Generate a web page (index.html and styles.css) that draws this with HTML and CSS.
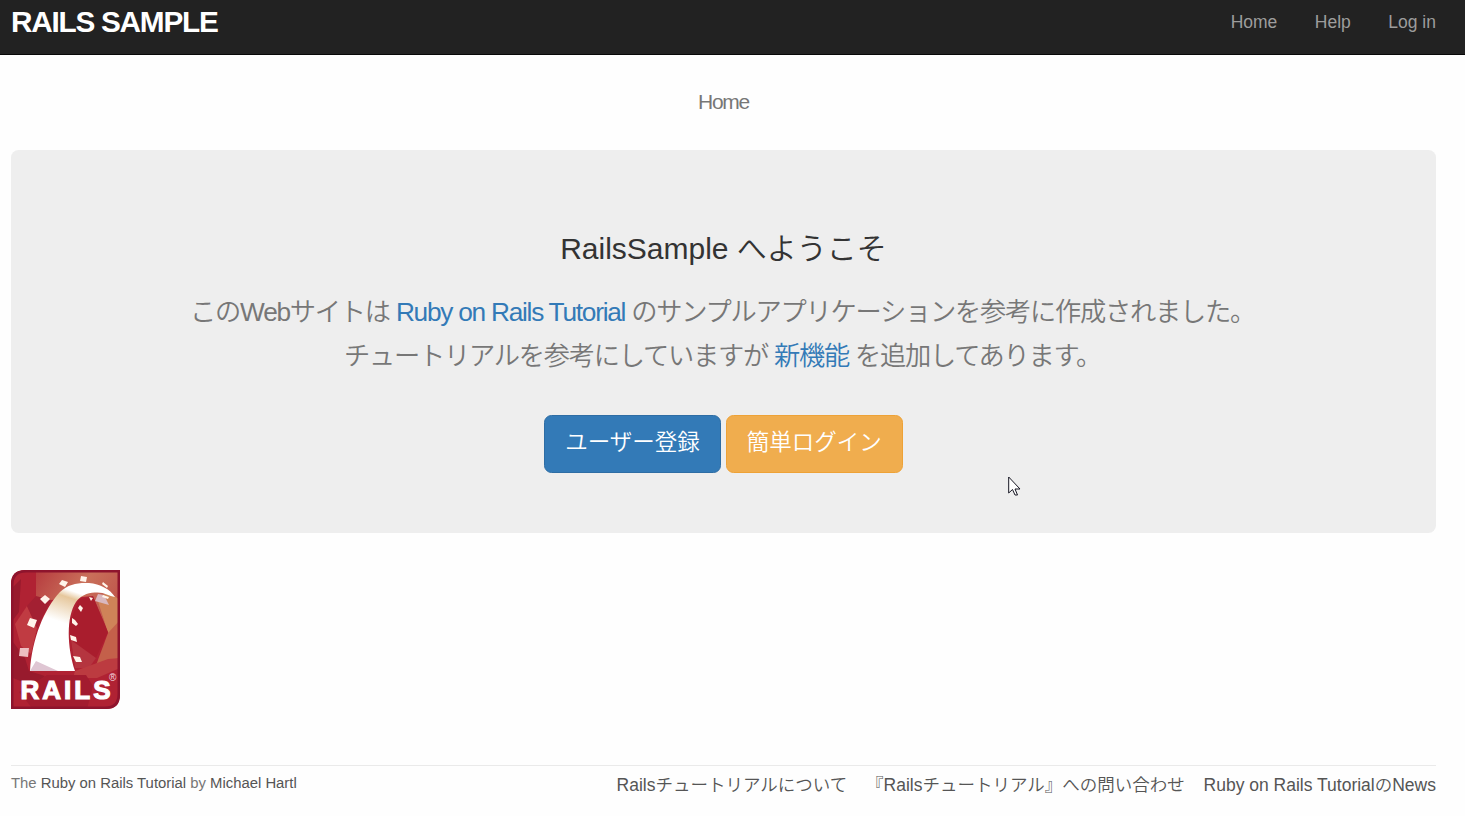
FILE: index.html
```html
<!DOCTYPE html>
<html lang="ja">
<head>
<meta charset="utf-8">
<title>Home | Rails Sample</title>
<link rel="stylesheet" href="styles.css">
</head>
<body>
<header class="navbar">
  <a class="logo">rails sample</a>
  <nav class="nav-links"><a>Home</a><a>Help</a><a>Log in</a></nav>
</header>
<main class="container">
  <h2 class="page-title">Home</h2>
  <section class="jumbotron">
    <h1 class="welcome">RailsSample へようこそ</h1>
    <p class="lead">このWebサイトは <a>Ruby on Rails Tutorial</a> のサンプルアプリケーションを参考に作成されました。</p>
    <p class="lead">チュートリアルを参考にしていますが <a>新機能</a> を追加してあります。</p>
    <div class="actions"><a class="btn btn-primary">ユーザー登録</a><a class="btn btn-warning">簡単ログイン</a></div>
  </section>
  <svg class="rails" width="109" height="139" viewBox="0 0 109 139">
    <defs>
      <clipPath id="badge"><path d="M0 14Q0 0 14 0H109V125Q109 139 95 139H0Z"/></clipPath>
      <linearGradient id="track" gradientUnits="userSpaceOnUse" x1="62" y1="14" x2="44" y2="68"><stop offset="0" stop-color="#fff"/><stop offset=".12" stop-color="#fff"/><stop offset=".25" stop-color="#e6c79c"/><stop offset=".7" stop-color="#fff"/></linearGradient>
      <linearGradient id="sky" x1="0" y1="0" x2="1" y2=".6"><stop offset="0" stop-color="#b63a3e"/><stop offset=".5" stop-color="#c9705a"/><stop offset="1" stop-color="#bd4f48"/></linearGradient>
    </defs>
    <g clip-path="url(#badge)">
      <path fill="#b02233" d="M0 0H109V139H0Z"/>
      <path fill="url(#sky)" d="M25 0H109V72L97 62L82 26L40 30L25 48Z"/>
      <path fill="#cf8358" d="M86 28L98 22L109 30V58L97 63Z"/>
      <path fill="#c4604a" d="M97 63L109 50V88L84 98Z"/>
      <path fill="#c03b42" d="M4 54L16 36L26 58L20 84L10 76Z"/>
      <path fill="#a32032" d="M25 26L40 30L26 58L16 36Z"/>
      <path fill="#981a2d" d="M2 17L10 9L8 42L2 50ZM2 72L14 88L18 101L34 106L22 116L2 108Z"/>
      <path fill="#a91d2d" d="M58 55L68 29L82 27L97 62L85 88L63 96Z"/>
      <path fill="#b5353f" d="M60 70L85 88L78 98H64Z"/>
      <path fill="#bc3b40" d="M64 101L97 89L109 88V98L86 108L62 108Z"/>
      <path fill="#a31c2f" d="M36 105H75L82 116L76 139H22L8 122Z"/>
      <path fill="url(#track)" d="M19 101C21 69 33 39 49 22C57 14 67 12.5 78 13C89 14 99 19 104 27C98 26 93 22 85 22.5C77 22 69 26 65 32C55 47 56 77 64 101Z"/>
      <path fill="#d9b8bf" d="M87 24L93 25L98 35L84 31Z"/>
      <path fill="#dfc6d3" d="M19 101L25 91L47 101Z"/>
      <g fill="#fff4ea">
        <path d="M70 6L76 7L75 12L69 11ZM51 10L57 12L54 17L48 14ZM34 25L39 29L34 34L29 29ZM19 48L26 50L23 58L16 55ZM92 12L97 16L96 18L91 14ZM78 27L82 28L80 31ZM92 25L98 27L97 29L91 27ZM69 35L72 38L70 42L67 38ZM61 48L64 50L67 54L65 56L61 53ZM59 65L65 67L66 72L60 70ZM62 86L69 87L71 92L65 92Z"/>
        <path fill="#edbec1" d="M9 78L18 78L17 87L8 86Z"/>
      </g>
      <path fill="none" stroke="#8e142d" stroke-width="3" d="M1 15Q1 1 15 1H108V124Q108 138 94 138H1Z"/>
      <text class="rails-word" x="9.5" y="129" textLength="90" lengthAdjust="spacing">RAILS</text>
      <text class="rails-mark" x="98" y="111">®</text>
    </g>
  </svg>
  <footer class="footer">
    <small>The <a>Ruby on Rails Tutorial</a> by <a>Michael Hartl</a></small>
    <nav class="footer-links"><a>Railsチュートリアルについて</a><a>『Railsチュートリアル』への問い合わせ</a><a>Ruby on Rails TutorialのNews</a></nav>
  </footer>
</main>
<svg class="cursor" width="13" height="21" viewBox="0 0 13 21"><path fill="#fff" stroke="#161622" d="M.7 1V17L4.5 13.5L7 19H9.5L7 13H12Z"/></svg>
</body>
</html>
```
FILE: styles.css
```css
* { box-sizing: border-box; }
body {
  margin: 0;
  height: 816px;
  overflow: hidden;
  background: #fefefe;
  color: #333;
  font: 17.5px/25px "Liberation Sans", Arial, "Noto Sans CJK JP DemiLight", "Noto Sans CJK JP", sans-serif;
  font-weight: 350;
}
.navbar {
  display: flex;
  justify-content: space-between;
  height: 55px;
  padding: 0 29px 0 11px;
  background: #222;
  border-bottom: 1px solid #080808;
}
.logo {
  color: #fff;
  font-size: 29.75px;
  font-weight: 700;
  letter-spacing: -1.25px;
  line-height: 44px;
  text-transform: uppercase;
}
.nav-links { display: flex; gap: 37.5px; line-height: 44px; color: #9d9d9d; }
.container { padding: 0 29px 0 11px; }
.page-title {
  margin: 0;
  padding: 34px 0 35px;
  color: #777;
  font-size: 21px;
  font-weight: 350;
  line-height: 26px;
  letter-spacing: -1.25px;
  text-align: center;
}
.jumbotron {
  height: 383px;
  padding-top: 82px;
  background: #eee;
  border-radius: 7.5px;
  text-align: center;
}
.welcome { margin: 0 0 24px; font-size: 30px; font-weight: 350; line-height: 34px; }
.lead {
  margin: 0;
  padding-right: 2px;
  color: #777;
  font-size: 26.25px;
  line-height: 44px;
  letter-spacing: -1.25px;
  white-space: nowrap;
}
.lead a { color: #337ab7; }
.actions { display: flex; justify-content: center; gap: 5px; margin-top: 37px; }
.btn {
  height: 58px;
  padding: 0 20px;
  border: 1px solid;
  border-radius: 7.5px;
  color: #fff;
  font-size: 22.5px;
  line-height: 54px;
}
.btn-primary { background: #337ab7; border-color: #2e6da4; }
.btn-warning { background: #f0ad4e; border-color: #eea236; }
.rails { display: block; margin-top: 37px; }
.rails-word { fill: #fff; stroke: #fff; stroke-width: 1.2px; font: 700 26px "Liberation Sans", sans-serif; }
.rails-mark { fill: #f5dce0; font: 10px "Liberation Sans", sans-serif; }
.footer {
  display: flex;
  justify-content: space-between;
  margin-top: 56px;
  padding-top: 5px;
  border-top: 1px solid #eaeaea;
  color: #777;
}
.footer small { font-size: 14.875px; }
.footer a { color: #555; }
.footer-links { display: flex; gap: 18.75px; padding-top: 2px; }
.cursor { position: absolute; left: 1008px; top: 476px; }
```
